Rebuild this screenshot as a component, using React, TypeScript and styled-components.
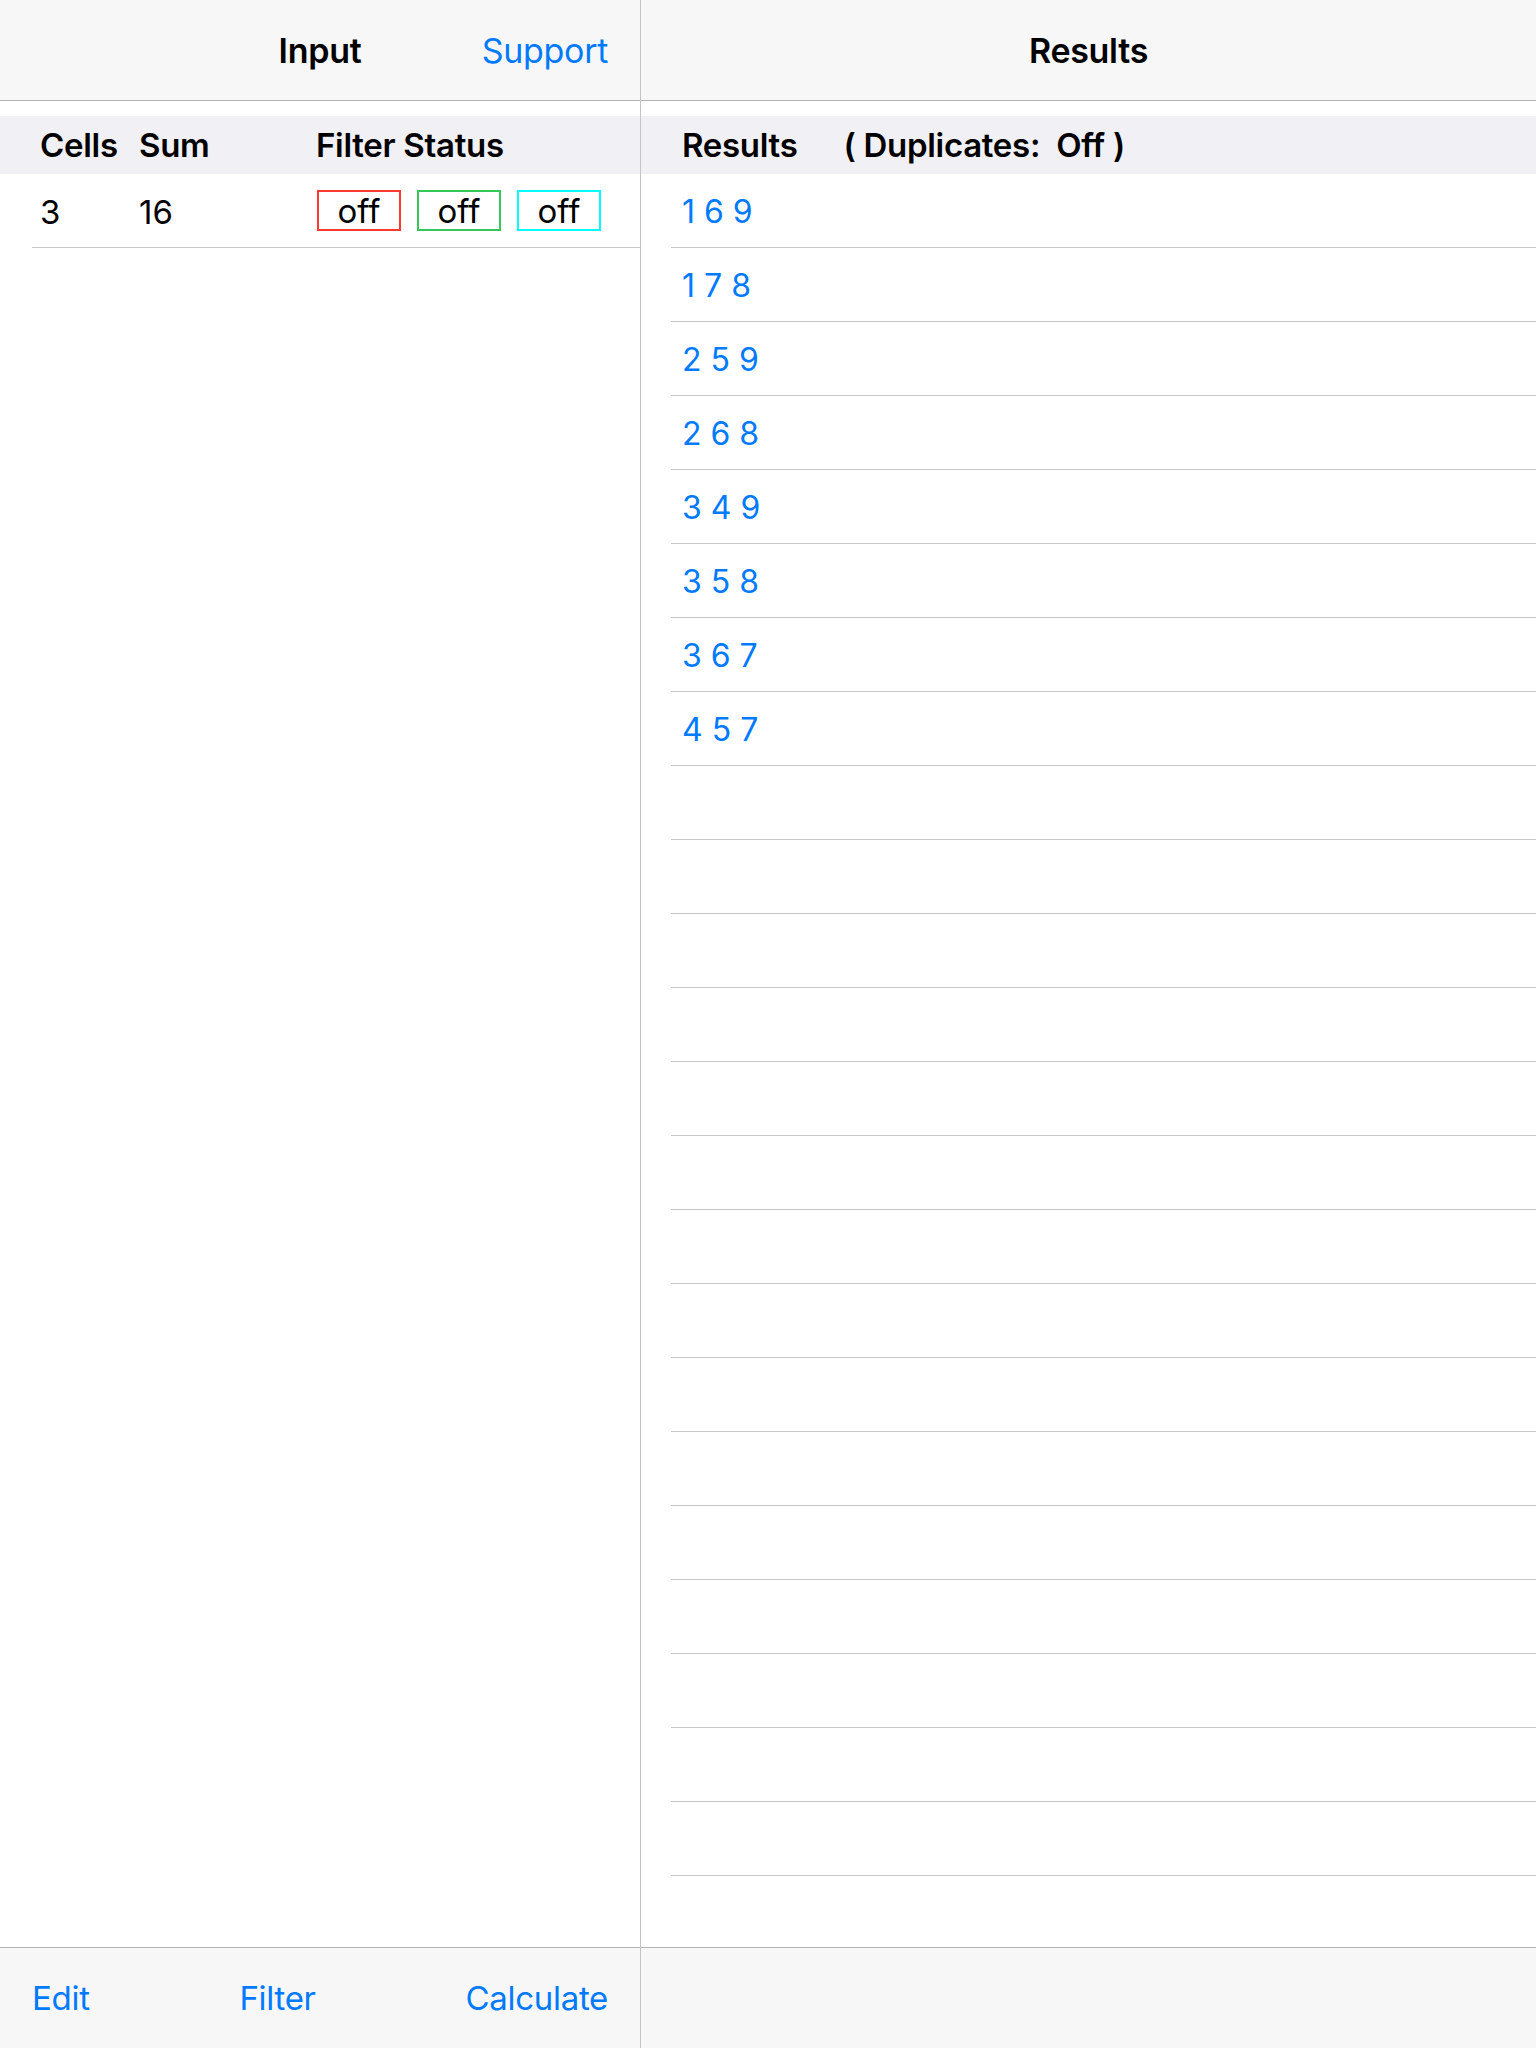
import React from "react";
import styled, { createGlobalStyle } from "styled-components";

const GlobalStyle = createGlobalStyle`
  html, body {
    margin: 0;
    padding: 0;
    background: #ffffff;
  }
  body {
    font-family: Inter, "Noto Sans", "Liberation Sans", sans-serif;
    color: #000000;
    -webkit-font-smoothing: antialiased;
  }
`;

const BLUE = "#007aff";

const Screen = styled.div`
  width: 1536px;
  height: 2048px;
  display: grid;
  grid-template-columns: 641px 1fr;
  overflow: hidden;
`;

const Pane = styled.section<{ $divider?: boolean }>`
  display: flex;
  flex-direction: column;
  min-width: 0;
  height: 100%;
  box-sizing: border-box;
  border-right: ${(p) => (p.$divider ? "1px solid #c4c4c4" : "none")};
`;

const NavBar = styled.header`
  height: 101px;
  box-sizing: border-box;
  flex-shrink: 0;
  background: #f7f7f7;
  border-bottom: 1px solid #b4b4b4;
  display: grid;
  grid-template-columns: 1fr auto 1fr;
  align-items: center;
  padding: 0 32px;
`;

const NavTitle = styled.h1`
  grid-column: 2;
  margin: 0;
  font-size: 34px;
  font-weight: 600;
  letter-spacing: -0.3px;
`;

const NavButton = styled.button`
  grid-column: 3;
  justify-self: end;
  border: none;
  background: none;
  padding: 0;
  font: inherit;
  font-size: 34px;
  color: ${BLUE};
  letter-spacing: -0.3px;
`;

const Body = styled.div`
  flex: 1;
  min-height: 0;
  overflow: hidden;
  padding-top: 15px;
  background: #ffffff;
`;

const SectionHeader = styled.div<{ $cols: string; $inset: number }>`
  height: 58px;
  background: #f1f1f5;
  display: grid;
  grid-template-columns: ${(p) => p.$cols};
  align-items: center;
  padding-left: ${(p) => p.$inset}px;
  font-size: 33px;
  font-weight: 600;
  letter-spacing: -0.3px;
`;

const Row = styled.div<{ $cols: string; $inset: number; $pad: number }>`
  height: 74px;
  box-sizing: border-box;
  margin-left: ${(p) => p.$inset}px;
  padding-left: ${(p) => p.$pad}px;
  padding-top: 2px;
  border-bottom: 1px solid #c8c7cc;
  display: grid;
  grid-template-columns: ${(p) => p.$cols};
  align-items: center;
  font-size: 33px;
`;

const FilterGroup = styled.div`
  display: flex;
  gap: 16px;
  margin-left: 1px;
  margin-top: -2px;
`;

const FilterBox = styled.span<{ $color: string }>`
  width: 84px;
  height: 41px;
  box-sizing: border-box;
  border: 2px solid ${(p) => p.$color};
  display: flex;
  align-items: center;
  justify-content: center;
  font-size: 33px;
  line-height: 1;
  padding-top: 2px;
`;

const ResultText = styled.span`
  color: ${BLUE};
  font-size: 32px;
  white-space: pre;
`;

const HeaderLabel = styled.span<{ $gap?: number }>`
  margin-right: ${(p) => p.$gap ?? 0}px;
  white-space: pre;
`;

const Toolbar = styled.footer`
  height: 101px;
  box-sizing: border-box;
  flex-shrink: 0;
  background: #f7f7f7;
  border-top: 1px solid #b4b4b4;
  display: flex;
  align-items: center;
  justify-content: space-between;
  padding: 0 32px;
`;

const ToolButton = styled.button`
  border: none;
  background: none;
  padding: 0;
  font: inherit;
  font-size: 33px;
  color: ${BLUE};
  letter-spacing: -0.3px;
`;

const LEFT_COLS = "99px 177px 1fr";
const results = ["1 6 9", "1 7 8", "2 5 9", "2 6 8", "3 4 9", "3 5 8", "3 6 7", "4 5 7"];
const TOTAL_ROWS = 23;

export default function App() {
  const rows = Array.from({ length: TOTAL_ROWS }, (_, i) => results[i] ?? "");

  return (
    <>
      <GlobalStyle />
      <Screen>
        <Pane $divider>
          <NavBar>
            <NavTitle>Input</NavTitle>
            <NavButton>Support</NavButton>
          </NavBar>
          <Body>
            <SectionHeader $cols={LEFT_COLS} $inset={40}>
              <span>Cells</span>
              <span>Sum</span>
              <span>Filter Status</span>
            </SectionHeader>
            <Row $cols={LEFT_COLS} $inset={32} $pad={8}>
              <span>3</span>
              <span>16</span>
              <FilterGroup>
                <FilterBox $color="#ff3b30">off</FilterBox>
                <FilterBox $color="#34c759">off</FilterBox>
                <FilterBox $color="#00ffff">off</FilterBox>
              </FilterGroup>
            </Row>
          </Body>
          <Toolbar>
            <ToolButton>Edit</ToolButton>
            <ToolButton>Filter</ToolButton>
            <ToolButton>Calculate</ToolButton>
          </Toolbar>
        </Pane>
        <Pane>
          <NavBar>
            <NavTitle>Results</NavTitle>
          </NavBar>
          <Body>
            <SectionHeader $cols="auto" $inset={41}>
              <div>
                <HeaderLabel $gap={46}>Results</HeaderLabel>
                <HeaderLabel>( Duplicates:  Off )</HeaderLabel>
              </div>
            </SectionHeader>
            {rows.map((r, i) => (
              <Row key={i} $cols="1fr" $inset={30} $pad={11}>
                <ResultText>{r}</ResultText>
              </Row>
            ))}
          </Body>
          <Toolbar />
        </Pane>
      </Screen>
    </>
  );
}
